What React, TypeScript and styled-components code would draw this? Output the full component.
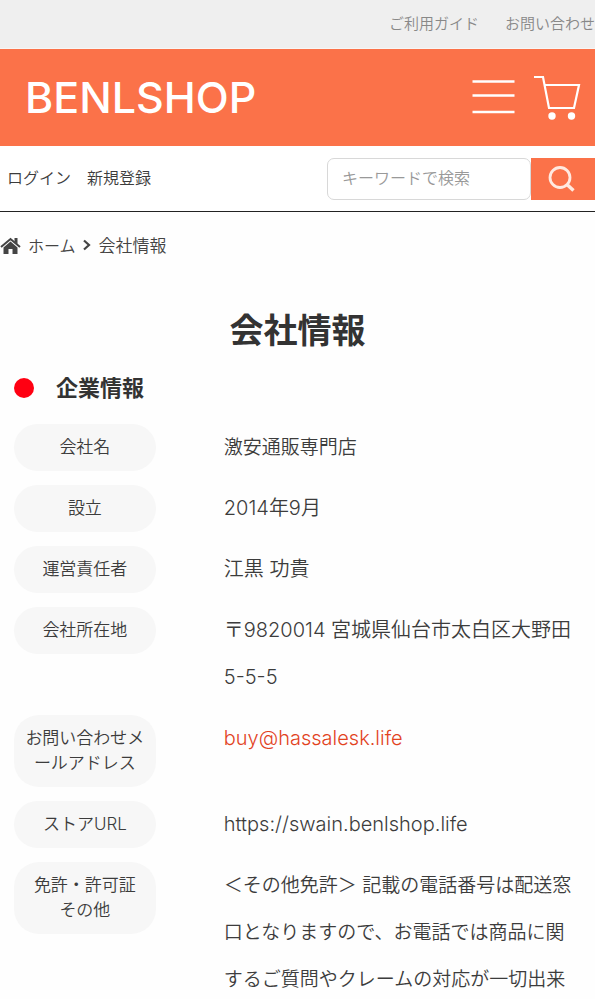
import React from "react";
import styled, { createGlobalStyle } from "styled-components";

const GlobalStyle = createGlobalStyle`
  *, *::before, *::after { box-sizing: border-box; }
  body {
    margin: 0;
    background: #fefefe;
    color: #3c3c3c;
    font-family: Inter, "Noto Sans CJK JP", sans-serif;
    font-size: 17px;
    font-weight: 350;
    line-height: 25px;
  }
  a { color: inherit; text-decoration: none; }
`;

const UtilityBar = styled.nav`
  display: flex;
  justify-content: flex-end;
  align-items: center;
  gap: 26px;
  height: 49px;
  padding-bottom: 2px;
  background: #efefef;
  border-bottom: 1px solid #f8f6f5;
  color: #888;
  font-size: 15px;
`;

const Header = styled.header`
  display: flex;
  align-items: center;
  justify-content: space-between;
  height: 97px;
  padding: 0 14px 2px 25px;
  background: #fb7249;
  color: #fff;
`;

const Logo = styled.a`
  font-size: 43px;
  font-weight: 500;
  line-height: 52px;
`;

const HeaderActions = styled.div`
  display: flex;
  align-items: center;
  gap: 18px;
`;

const IconButton = styled.button`
  display: flex;
  padding: 0;
  border: 0;
  background: none;
  color: inherit;
`;

const AccountBar = styled.div`
  display: flex;
  align-items: center;
  justify-content: space-between;
  height: 66px;
  padding-left: 7px;
  background: #fff;
  border-bottom: 1px solid #222;
`;

const AccountLinks = styled.nav`
  display: flex;
  gap: 16px;
  font-size: 16px;
`;

const SearchForm = styled.form`
  display: flex;
  height: 42px;
`;

const SearchInput = styled.input`
  width: 204px;
  padding: 0 14px;
  border: 1px solid #d8d8d8;
  border-radius: 7px;
  background: #fff;
  color: #333;
  font: inherit;
  font-size: 16px;
  &::placeholder { color: #999; opacity: 1; }
`;

const SearchButton = styled.button`
  display: flex;
  align-items: center;
  width: 64px;
  padding: 0 17px;
  border: 0;
  background: #fb7249;
  color: #ffe9e0;
`;

const Breadcrumb = styled.nav`
  display: flex;
  align-items: center;
  height: 68px;
  gap: 7px;
  color: #444;
`;

const BreadcrumbLink = styled.a`
  display: flex;
  align-items: center;
  gap: 7px;
  font-size: 16px;
`;

const Content = styled.main`
  padding: 0 14px;
`;

const PageTitle = styled.h1`
  margin: 25px 0 15px;
  color: #333;
  font-size: 34px;
  font-weight: 700;
  line-height: 52px;
  text-align: center;
`;

const SectionTitle = styled.h2`
  display: flex;
  align-items: center;
  gap: 22px;
  margin: 0 0 20px;
  color: #333;
  font-size: 22px;
  font-weight: 700;
  line-height: 32px;
  &::before {
    content: "";
    width: 20px;
    height: 20px;
    border-radius: 50%;
    background: #ff0012;
  }
`;

const CompanyList = styled.dl`
  display: flex;
  flex-direction: column;
  gap: 14px;
  margin: 0;
`;

const CompanyRow = styled.div`
  display: grid;
  grid-template-columns: 25% 63%;
  justify-content: space-between;
  align-items: start;
`;

const Term = styled.dt`
  padding: 11px;
  border-radius: 25px;
  background: #f7f7f7;
  text-align: center;
`;

const Detail = styled.dd<{ $latin?: boolean }>`
  margin: 0;
  font-size: ${({ $latin }) => ($latin ? 20 : 19)}px;
  line-height: 47px;
`;

const MailLink = styled.a`
  && { color: #e2431e; }
`;

const MenuIcon = () => (
  <svg width="43" height="36" viewBox="0 0 43 36" fill="none" stroke="currentColor" strokeWidth="2.6" aria-hidden="true">
    <path d="M.5 2.5h42M.5 16.5h42M.5 33h42" />
  </svg>
);

const CartIcon = () => (
  <svg width="48" height="46" viewBox="0 0 48 46" fill="none" stroke="currentColor" strokeWidth="2.2" aria-hidden="true">
    <path d="M1 3h9l6 31h25l5-23H12" />
    <circle cx="19" cy="42" r="3.7" fill="currentColor" stroke="none" />
    <circle cx="38.5" cy="42" r="3.7" fill="currentColor" stroke="none" />
  </svg>
);

const SearchIcon = () => (
  <svg width="28" height="28" viewBox="0 0 28 28" fill="none" stroke="currentColor" strokeWidth="2.8" aria-hidden="true">
    <circle cx="12" cy="12.5" r="10" />
    <path d="m19 19.5 6.5 6" strokeWidth="3.4" />
  </svg>
);

const HomeIcon = () => (
  <svg width="21" height="18" viewBox="0 0 21 18" aria-hidden="true">
    <path d="M1 10 10.5 2 20 10" fill="none" stroke="#444" strokeWidth="2" />
    <path d="M14.5 1h3v6l-3-2.5Z" fill="#444" />
    <path d="m10.5 4.5 7 6V17h-5v-5h-4v5h-5v-6.5Z" fill="#444" />
  </svg>
);

const ChevronIcon = () => (
  <svg width="9" height="16" viewBox="0 0 9 16" fill="none" stroke="#444" strokeWidth="2.2" aria-hidden="true">
    <path d="m1 2.5 5 4.5-5 4.5" />
  </svg>
);

type CompanyItem = { term: React.ReactNode; detail: React.ReactNode; latin?: boolean };

const company: CompanyItem[] = [
  { term: "会社名", detail: "激安通販専門店" },
  { term: "設立", detail: "2014年9月", latin: true },
  { term: "運営責任者", detail: "江黒 功貴", latin: true },
  { term: "会社所在地", detail: <>〒9820014 宮城県仙台市太白区大野田<br />5-5-5</>, latin: true },
  {
    term: <>お問い合わせメ<br />ールアドレス</>,
    detail: <MailLink href="mailto:buy@hassalesk.life">buy@hassalesk.life</MailLink>,
    latin: true,
  },
  { term: "ストアURL", detail: "https://swain.benlshop.life", latin: true },
  {
    term: <>免許・許可証<br />その他</>,
    detail: "＜その他免許＞ 記載の電話番号は配送窓口となりますので、お電話では商品に関するご質問やクレームの対応が一切出来",
  },
];

export default function App() {
  return (
    <>
      <GlobalStyle />
      <UtilityBar>
        <a href="#guide">ご利用ガイド</a>
        <a href="#contact">お問い合わせ</a>
      </UtilityBar>
      <Header>
        <Logo href="#top">BENLSHOP</Logo>
        <HeaderActions>
          <IconButton type="button" aria-label="メニュー"><MenuIcon /></IconButton>
          <IconButton type="button" aria-label="カート"><CartIcon /></IconButton>
        </HeaderActions>
      </Header>
      <AccountBar>
        <AccountLinks>
          <a href="#login">ログイン</a>
          <a href="#register">新規登録</a>
        </AccountLinks>
        <SearchForm role="search">
          <SearchInput type="text" aria-label="キーワードで検索" placeholder="キーワードで検索" />
          <SearchButton type="submit" aria-label="検索"><SearchIcon /></SearchButton>
        </SearchForm>
      </AccountBar>
      <Breadcrumb aria-label="パンくず">
        <BreadcrumbLink href="#home"><HomeIcon />ホーム</BreadcrumbLink>
        <ChevronIcon />
        <span>会社情報</span>
      </Breadcrumb>
      <Content>
        <PageTitle>会社情報</PageTitle>
        <SectionTitle>企業情報</SectionTitle>
        <CompanyList>
          {company.map((row, index) => (
            <CompanyRow key={index}>
              <Term>{row.term}</Term>
              <Detail $latin={row.latin}>{row.detail}</Detail>
            </CompanyRow>
          ))}
        </CompanyList>
      </Content>
    </>
  );
}
